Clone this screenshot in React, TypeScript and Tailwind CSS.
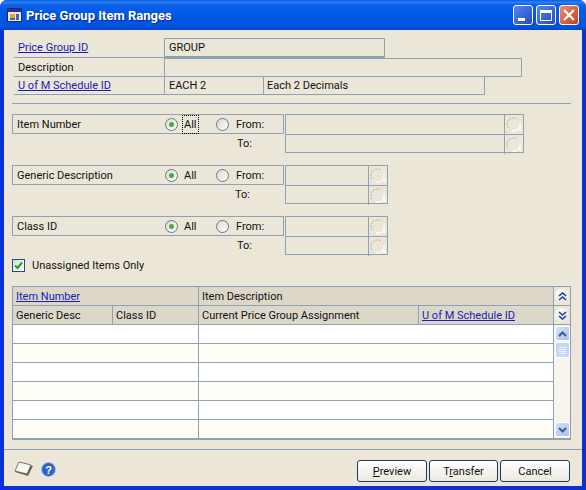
import React from "react";

const line = "border-[#8ca2b5]";

function Lookup() {
  return (
    <div className="w-[18px] h-[19px] flex items-center justify-center">
      <svg width="16" height="16" viewBox="0 0 16 16" fill="none">
        <path d="M2 11 A6.5 6.5 0 0 1 11 2" stroke="#b4b2a6" strokeWidth="1" strokeDasharray="2 1" />
        <path d="M14 6 A6.5 6.5 0 0 1 6 14" stroke="#fbfaf4" strokeWidth="1.4" />
        <path d="M12 13 h3 M15 10 v4" stroke="#fbfaf4" strokeWidth="1.2" />
      </svg>
    </div>
  );
}

function Radio({ on }: { on?: boolean }) {
  return (
    <svg width="13" height="13" viewBox="0 0 13 13" className="shrink-0">
      <defs>
        <linearGradient id={on ? "ra" : "rb"} x1="0" y1="0" x2="1" y2="1">
          <stop offset="0" stopColor="#dcd8cc" />
          <stop offset="1" stopColor="#ffffff" />
        </linearGradient>
      </defs>
      <circle cx="6.5" cy="6.5" r="6" fill={`url(#${on ? "ra" : "rb"})`} stroke="#5f7a90" strokeWidth="1" />
      {on && <circle cx="6.5" cy="6.5" r="2.5" fill="#3fae4a" />}
    </svg>
  );
}

function RangeRow({
  label,
  focus,
  fieldW,
  toPad,
}: {
  label: string;
  focus?: boolean;
  fieldW: string;
  toPad: string;
}) {
  return (
    <div className="flex w-fit">
      <div className="w-[272px] mr-[1px]">
        <div className={`h-[20px] border ${line} flex items-center pl-[4px]`}>
          <span className="w-[148px]">{label}</span>
          <Radio on />
          <span className="ml-[6px] w-[32px]">
            <span className={focus ? "outline-1 outline-dotted outline-black px-[1px] -ml-[1px] py-[2px]" : ""}>All</span>
          </span>
          <Radio />
          <span className="ml-[7px]">From:</span>
        </div>
        <div className={`h-[19px] flex items-center ${toPad}`}>To:</div>
      </div>
      <div className={`border ${line} ${fieldW} h-[39px] flex flex-col`}>
        <div className={`flex flex-1 border-b ${line}`}>
          <div className={`flex-1 border-r ${line}`} />
          <Lookup />
        </div>
        <div className="flex flex-1">
          <div className={`flex-1 border-r ${line}`} />
          <Lookup />
        </div>
      </div>
    </div>
  );
}

function Chevrons({ up }: { up?: boolean }) {
  return (
    <div className="w-[14px] h-[14px] rounded-full bg-gradient-to-br from-[#ffffff] to-[#e4e2da] flex items-center justify-center">
      <svg width="9" height="9" viewBox="0 0 9 9" fill="none" stroke="#1d3f9a" strokeWidth="1.6">
        {up ? (
          <path d="M1 4 L4.5 1 L8 4 M1 8 L4.5 5 L8 8" />
        ) : (
          <path d="M1 1 L4.5 4 L8 1 M1 5 L4.5 8 L8 5" />
        )}
      </svg>
    </div>
  );
}

function ScrollBtn({ up }: { up?: boolean }) {
  return (
    <div className="w-[15px] h-[15px] mx-auto rounded-[2px] border border-white bg-gradient-to-br from-[#d6e2fa] to-[#aebff0] flex items-center justify-center">
      <svg width="9" height="6" viewBox="0 0 9 6" fill="none" stroke="#3c5a8c" strokeWidth="2">
        {up ? <path d="M1 5 L4.5 1.5 L8 5" /> : <path d="M1 1 L4.5 4.5 L8 1" />}
      </svg>
    </div>
  );
}

function GridRow({ alt }: { alt?: boolean }) {
  return (
    <div className={`flex h-[19px] border-b ${line} ${alt ? "bg-[#fffef6]" : "bg-white"}`}>
      <div className={`w-[186px] border-r ${line}`} />
      <div className="flex-1" />
    </div>
  );
}

export default function App() {
  return (
    <div className="w-[586px] h-[490px] flex flex-col bg-[#0831d9] rounded-t-[7px] overflow-hidden font-['Roboto',sans-serif] text-[11px] leading-none text-[#111]">
      {/* Title bar */}
      <div className="h-[30px] shrink-0 flex items-center pl-[7px] pr-[7px] bg-[linear-gradient(to_bottom,#0a5ce0_0%,#2c80f4_8%,#0a60e8_16%,#0058e6_50%,#0254e0_85%,#0347c8_100%)]">
        <svg width="15" height="14" viewBox="0 0 15 14" className="shrink-0">
          <rect x="0.5" y="0.5" width="14" height="13" fill="#e8e8f0" stroke="#1c2a5c" />
          <rect x="1" y="1" width="13" height="3" fill="#26348c" />
          <rect x="3" y="6" width="5" height="4" fill="#e8a418" />
          <rect x="9" y="6" width="3" height="6" fill="#3a66c8" />
          <rect x="3" y="10" width="5" height="2" fill="#3a66c8" />
        </svg>
        <span className="ml-[4px] font-bold text-[13px] text-white [text-shadow:1px_1px_1px_#0a2a80]">
          Price Group Item Ranges
        </span>
        <div className="ml-auto flex gap-[3px]">
          <div className="w-[20px] h-[20px] rounded-[3px] border border-white bg-gradient-to-br from-[#5c86ec] to-[#2448c8] flex items-end pl-[4px] pb-[3px]">
            <div className="w-[7px] h-[3px] bg-white" />
          </div>
          <div className="w-[20px] h-[20px] rounded-[3px] border border-white bg-gradient-to-br from-[#5c86ec] to-[#2448c8] flex items-center justify-center">
            <div className="w-[12px] h-[11px] border border-white border-t-[3px]" />
          </div>
          <div className="w-[20px] h-[20px] rounded-[3px] border border-white bg-gradient-to-br from-[#ec8a6c] to-[#c4401c] flex items-center justify-center">
            <svg width="12" height="12" viewBox="0 0 12 12" stroke="white" strokeWidth="2.2">
              <path d="M1 1 L11 11 M11 1 L1 11" />
            </svg>
          </div>
        </div>
      </div>

      {/* Body */}
      <div className="flex-1 flex flex-col mx-[4px] mb-[4px] bg-[#ece6d8]">
        <div className="flex-1 pl-[8px] pr-[11px] pt-[8px]">
          {/* Header fields */}
          <div className="ml-[2px]">
            <div className={`flex h-[20px] border-b ${line} w-[371px]`}>
              <div className="w-[150px] flex items-center pl-[4px]">
                <span className="text-[#1a1ab4] underline">Price Group ID</span>
              </div>
              <div className={`flex-1 border ${line} flex items-center pl-[4px]`}>GROUP</div>
            </div>
            <div className={`flex h-[19px] border-b ${line} w-[508px]`}>
              <div className="w-[150px] flex items-center pl-[4px]">Description</div>
              <div className={`flex-1 border-x border-t ${line}`} />
            </div>
            <div className={`flex h-[18px] border-b ${line} w-[471px]`}>
              <div className="w-[150px] flex items-center pl-[4px]">
                <span className="text-[#1a1ab4] underline">U of M Schedule ID</span>
              </div>
              <div className={`w-[100px] border-x ${line} flex items-center pl-[4px]`}>EACH 2</div>
              <div className={`flex-1 border-r ${line} flex items-center pl-[3px]`}>Each 2 Decimals</div>
            </div>
          </div>
          <div className={`border-b ${line} h-[9px] mb-[10px]`} />

          {/* Ranges */}
          <div className="flex flex-col gap-[12px]">
            <RangeRow label="Item Number" focus fieldW="w-[239px]" toPad="pl-[225px]" />
            <RangeRow label="Generic Description" fieldW="w-[103px]" toPad="pl-[223px]" />
            <RangeRow label="Class ID" fieldW="w-[103px]" toPad="pl-[225px]" />
          </div>

          {/* Checkbox */}
          <div className="flex items-center h-[13px] mt-[4px]">
            <div className="w-[13px] h-[13px] border border-[#1c5180] bg-gradient-to-br from-[#dcdcd4] to-white flex items-center justify-center">
              <svg width="9" height="9" viewBox="0 0 9 9" fill="none" stroke="#21a121" strokeWidth="2">
                <path d="M1 4.5 L3.5 7 L8 1.5" />
              </svg>
            </div>
            <span className="ml-[7px]">Unassigned Items Only</span>
          </div>

          {/* Grid */}
          <div className={`mt-[14px] w-[559px] h-[154px] border ${line} border-b-2 flex`}>
            <div className="w-[540px] flex flex-col">
              <div className={`flex h-[19px] border-b ${line} bg-[#ddd7ca]`}>
                <div className={`w-[186px] border-r ${line} flex items-center pl-[3px]`}>
                  <span className="text-[#1a1ab4] underline">Item Number</span>
                </div>
                <div className="flex items-center pl-[3px]">Item Description</div>
              </div>
              <div className={`flex h-[19px] border-b ${line} bg-[#ddd7ca]`}>
                <div className={`w-[100px] border-r ${line} flex items-center pl-[3px]`}>Generic Desc</div>
                <div className={`w-[86px] border-r ${line} flex items-center pl-[3px]`}>Class ID</div>
                <div className={`w-[220px] border-r ${line} flex items-center pl-[3px]`}>Current Price Group Assignment</div>
                <div className="flex items-center pl-[3px]">
                  <span className="text-[#1a1ab4] underline">U of M Schedule ID</span>
                </div>
              </div>
              <GridRow />
              <GridRow alt />
              <GridRow />
              <GridRow alt />
              <GridRow />
              <div className="flex flex-1 bg-[#fffef6]">
                <div className={`w-[186px] border-r ${line}`} />
              </div>
            </div>
            <div className={`flex-1 flex flex-col border-l ${line}`}>
              <div className={`h-[19px] border-b ${line} flex items-center justify-center`}>
                <Chevrons up />
              </div>
              <div className={`h-[19px] border-b ${line} flex items-center justify-center`}>
                <Chevrons />
              </div>
              <div className="flex-1 flex flex-col bg-[#f6f5ee] pt-[1px] pb-[1px]">
                <ScrollBtn up />
                <div className="w-[15px] h-[16px] mt-[1px] mx-auto rounded-[2px] border border-white bg-[#c8d6f6] flex flex-col items-center justify-center gap-[1px]">
                  <div className="w-[7px] h-[1px] bg-[#eef3ff]" />
                  <div className="w-[7px] h-[1px] bg-[#eef3ff]" />
                  <div className="w-[7px] h-[1px] bg-[#eef3ff]" />
                  <div className="w-[7px] h-[1px] bg-[#eef3ff]" />
                </div>
                <div className="flex-1" />
                <ScrollBtn />
              </div>
            </div>
          </div>
        </div>

        {/* Footer */}
        <div className={`h-[37px] shrink-0 border-t ${line} flex items-start pt-[10px] pl-[10px] pr-[12px]`}>
          <svg width="20" height="16" viewBox="0 0 20 16" className="shrink-0 mt-[1px]">
            <path d="M6 1 L19 5 L14 15 L1 11 Z" fill="#6b675a" />
            <path d="M5 1 L17 4 L13 13 L1 10 Z" fill="#fbfbf6" stroke="#4a4a44" strokeWidth="0.7" />
          </svg>
          <svg width="15" height="15" viewBox="0 0 15 15" className="ml-[7px] shrink-0 mt-[2px]">
            <circle cx="7.5" cy="7.5" r="7" fill="#2c62c8" stroke="#a8c0ea" />
            <text x="7.5" y="11.5" textAnchor="middle" fontSize="11" fontWeight="bold" fill="#fff" fontFamily="Liberation Sans">?</text>
          </svg>
          <div className="ml-auto flex gap-[2px]">
            <button className="w-[70px] h-[22px] rounded-[3px] border border-[#1d3c5c] bg-gradient-to-b from-white to-[#ece9e0]">
              <u>P</u>review
            </button>
            <button className="w-[69px] h-[22px] rounded-[3px] border border-[#1d3c5c] bg-gradient-to-b from-white to-[#ece9e0]">
              T<u>r</u>ansfer
            </button>
            <button className="w-[70px] h-[22px] rounded-[3px] border border-[#1d3c5c] bg-gradient-to-b from-white to-[#ece9e0]">
              Cancel
            </button>
          </div>
        </div>
      </div>
    </div>
  );
}
